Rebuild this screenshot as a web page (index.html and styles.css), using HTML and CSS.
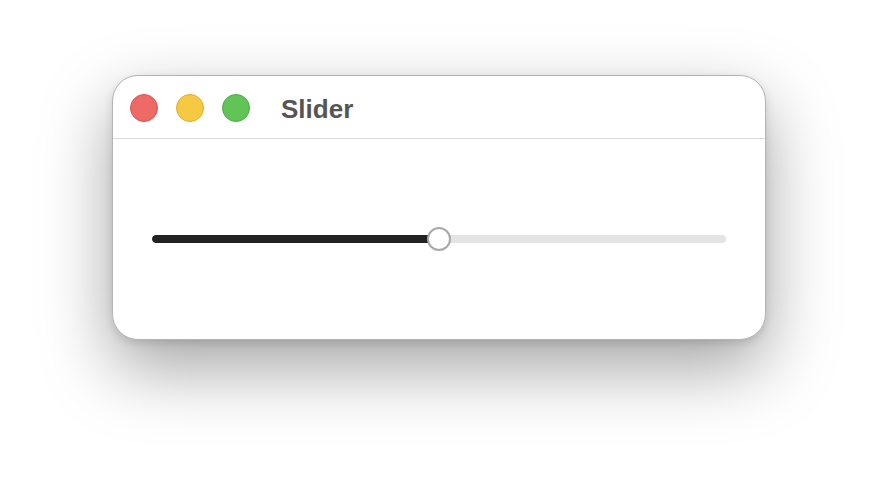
FILE: index.html
```html
<!DOCTYPE html>
<html>
<head>
<meta charset="utf-8">
<link rel="stylesheet" href="styles.css">
</head>
<body>
<div class="window">
  <div class="titlebar">
    <div class="lights">
      <span class="light red"></span>
      <span class="light yellow"></span>
      <span class="light green"></span>
    </div>
    <div class="title">Slider</div>
  </div>
  <div class="content">
    <div class="slider">
      <div class="track">
        <div class="fill" style="width: 50%"></div>
      </div>
      <div class="thumb" style="left: 50%"></div>
    </div>
  </div>
</div>
</body>
</html>
```
FILE: styles.css
```css
html, body {
  margin: 0;
  padding: 0;
  background: #ffffff;
}
body {
  width: 878px;
  height: 488px;
  padding: 75px 0 0 112px;
  box-sizing: border-box;
  font-family: "Liberation Sans", Arial, sans-serif;
}
.window {
  width: 654px;
  height: 265px;
  box-sizing: border-box;
  background: #ffffff;
  border: 1px solid #b4b4b4;
  border-radius: 26px;
  box-shadow: 0 28px 70px rgba(0, 0, 0, 0.36), 0 3px 8px rgba(0, 0, 0, 0.12);
  display: flex;
  flex-direction: column;
  overflow: hidden;
}
.titlebar {
  height: 63px;
  flex: none;
  display: flex;
  align-items: center;
  padding-left: 17px;
  padding-top: 1px;
  box-sizing: border-box;
  border-bottom: 1px solid #dcdcdc;
}
.lights {
  display: flex;
  gap: 18px;
}
.light {
  width: 26px;
  height: 26px;
  border-radius: 50%;
  display: block;
}
.red { background: #ee6a67; border: 1px solid #d9524f; }
.yellow { background: #f5c942; border: 1px solid #deac2a; }
.green { background: #61c456; border: 1px solid #4caa41; }
.title {
  margin-left: 31px;
  font-size: 26px;
  font-weight: bold;
  color: #555555;
  padding-top: 3px;
}
.content {
  flex: 1;
  display: flex;
  align-items: center;
  padding: 0 39px 0 39px;
}
.slider {
  position: relative;
  flex: 1;
  height: 24px;
  display: flex;
  align-items: center;
}
.track {
  flex: 1;
  height: 8px;
  border-radius: 4px;
  background: #e4e4e4;
  overflow: hidden;
}
.fill {
  height: 100%;
  background: #222222;
  border-radius: 4px;
}
.thumb {
  position: absolute;
  top: 0;
  width: 24px;
  height: 24px;
  margin-left: -12px;
  box-sizing: border-box;
  border-radius: 50%;
  background: #ffffff;
  border: 2px solid #a8a8a8;
}
```
